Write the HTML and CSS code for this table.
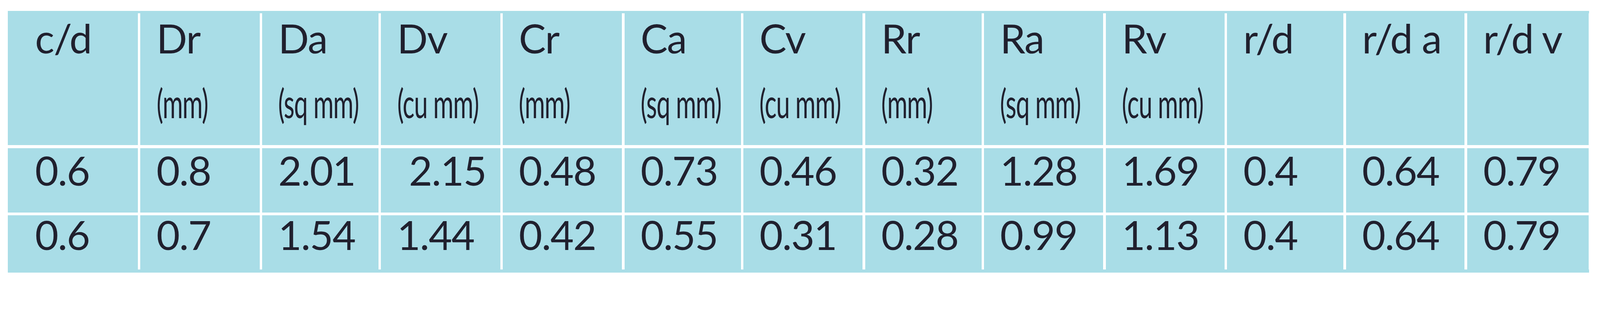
FILE: index.html
```html
<!DOCTYPE html>
<html>
<head>
<meta charset="utf-8">
<link rel="stylesheet" href="styles.css">
</head>
<body>
<div class="table">
  <div class="grid">
    <div class="cell head first"><div class="name">c/d</div></div>
    <div class="cell head"><div class="name">Dr</div><div class="unit">(mm)</div></div>
    <div class="cell head"><div class="name">Da</div><div class="unit">(sq mm)</div></div>
    <div class="cell head"><div class="name">Dv</div><div class="unit">(cu mm)</div></div>
    <div class="cell head"><div class="name">Cr</div><div class="unit">(mm)</div></div>
    <div class="cell head"><div class="name">Ca</div><div class="unit">(sq mm)</div></div>
    <div class="cell head"><div class="name">Cv</div><div class="unit">(cu mm)</div></div>
    <div class="cell head"><div class="name">Rr</div><div class="unit">(mm)</div></div>
    <div class="cell head"><div class="name">Ra</div><div class="unit">(sq mm)</div></div>
    <div class="cell head"><div class="name">Rv</div><div class="unit">(cu mm)</div></div>
    <div class="cell head"><div class="name">r/d</div></div>
    <div class="cell head"><div class="name">r/d a</div></div>
    <div class="cell head"><div class="name">r/d v</div></div>

    <div class="cell r1 first">0.6</div>
    <div class="cell r1">0.8</div>
    <div class="cell r1">2.01</div>
    <div class="cell r1"><span class="lead">2.15</span></div>
    <div class="cell r1">0.48</div>
    <div class="cell r1">0.73</div>
    <div class="cell r1">0.46</div>
    <div class="cell r1">0.32</div>
    <div class="cell r1">1.28</div>
    <div class="cell r1">1.69</div>
    <div class="cell r1">0.4</div>
    <div class="cell r1">0.64</div>
    <div class="cell r1">0.79</div>

    <div class="cell r2 first">0.6</div>
    <div class="cell r2">0.7</div>
    <div class="cell r2">1.54</div>
    <div class="cell r2">1.44</div>
    <div class="cell r2">0.42</div>
    <div class="cell r2">0.55</div>
    <div class="cell r2">0.31</div>
    <div class="cell r2">0.28</div>
    <div class="cell r2">0.99</div>
    <div class="cell r2">1.13</div>
    <div class="cell r2">0.4</div>
    <div class="cell r2">0.64</div>
    <div class="cell r2">0.79</div>
  </div>
</div>
</body>
</html>
```

FILE: styles.css
```css
:root {
  --u: calc(100vw / 4468);
}

html, body {
  margin: 0;
  padding: 0;
  background: #ffffff;
  overflow: hidden;
}

body {
  padding-top: calc(30 * var(--u));
  padding-left: calc(22 * var(--u));
  font-family: "Lato", "Liberation Sans", sans-serif;
  color: #20202e;
}

.table {
  width: calc(4415 * var(--u));
  background: #a9dde7;
  padding: calc(7 * var(--u)) 0 calc(8 * var(--u)) 0;
}

.grid {
  display: grid;
  grid-template-columns:
    calc(363 * var(--u)) calc(333 * var(--u)) calc(325 * var(--u))
    calc(333 * var(--u)) calc(333 * var(--u)) calc(325 * var(--u))
    calc(333 * var(--u)) calc(325 * var(--u)) calc(333 * var(--u))
    calc(332 * var(--u)) calc(325 * var(--u)) calc(331 * var(--u))
    calc(340 * var(--u));
  grid-template-rows: calc(369 * var(--u)) calc(180 * var(--u)) calc(152 * var(--u));
  column-gap: calc(7 * var(--u));
  row-gap: calc(8 * var(--u));
  background: #ffffff;
}

.cell {
  background: #a9dde7;
  padding-left: calc(45 * var(--u));
  font-size: calc(113 * var(--u));
  letter-spacing: calc(-2 * var(--u));
  white-space: nowrap;
}

.cell.first {
  padding-left: calc(76 * var(--u));
}

.head {
  padding-top: calc(12 * var(--u));
}

.head .name {
  line-height: calc(114 * var(--u));
}

.head .unit {
  margin-top: calc(67 * var(--u));
  line-height: calc(114 * var(--u));
  transform: scaleX(0.61);
  transform-origin: left center;
}

.r1 {
  padding-top: calc(5 * var(--u));
  line-height: calc(114 * var(--u));
}

.r2 {
  line-height: calc(108 * var(--u));
}

.lead {
  padding-left: calc(33 * var(--u));
}
```
